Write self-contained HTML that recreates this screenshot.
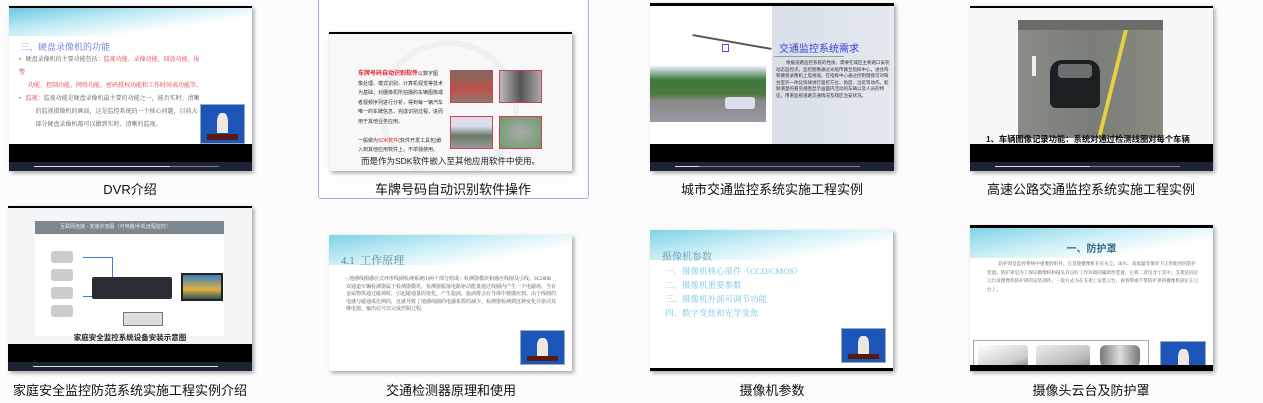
<!DOCTYPE html>
<html><head><meta charset="utf-8"><style>
*{margin:0;padding:0;box-sizing:border-box}
body{width:1263px;height:403px;background:#fcfcfc;position:relative;overflow:hidden;font-family:"Liberation Sans","Noto Sans CJK SC",sans-serif}
.a{position:absolute}
.card{position:absolute;background:#fff;box-shadow:2px 2px 4px rgba(0,0,0,.35);overflow:hidden}
.cap{position:absolute;font-size:13px;color:#111;text-align:center;width:270px}
.bar{position:absolute;left:0;right:0;bottom:0;height:9px;background:#1c2434}
.prog{position:absolute;top:4px;height:1px;background:#7a8090}
.blk{position:absolute;left:0;right:0;background:#000}
.wave{position:absolute;left:0;top:0;width:100%;height:32px;background:linear-gradient(170deg,#7fd3e6 0%,#c9eef6 40%,#fff 75%)}
.serif{font-family:"Liberation Serif","Noto Serif CJK SC",serif}
.anchor{position:absolute;background:#1b56b8;border:1px solid #9ab}
.anchor i{position:absolute;left:38%;top:20%;width:25%;height:55%;background:#f0e8e0;border-radius:40% 40% 0 0}
.anchor b{position:absolute;left:15%;bottom:8%;width:70%;height:16%;background:#5a1a10}
</style></head><body>

<div class="a" style="left:318px;top:-4px;width:271px;height:203px;border:1px solid #9db5dd;border-radius:3px;background:#fdfdfd"></div>

<!-- Card1 -->
<div class="card" style="left:9px;top:6px;width:243px;height:165px">
 <div class="blk" style="top:0;height:2px"></div>
 <div class="wave" style="top:2px;height:28px;background:linear-gradient(172deg,#6cc8e0 0%,#bfe9f4 35%,#fff 70%)"></div>
 <div class="a serif" style="left:11px;top:34px;font-size:9px;color:#5c6ee0">三、硬盘录像机的功能</div>
 <div class="a serif" style="left:10px;top:48px;width:225px;font-size:6px;line-height:13px;color:#555">•&nbsp;&nbsp; 硬盘录像机的主要功能包括：<span style="color:#e03040">监视功能、录像功能、回放功能、报</span><br><span style="color:#e03040">警<br>&nbsp;&nbsp;&nbsp;&nbsp;&nbsp;&nbsp;功能、控制功能、网络功能、密码授权功能和工作时间表功能等。</span><br>•&nbsp;&nbsp; <span style="color:#e03040">监视：</span>监视功能是硬盘录像机最主要的功能之一，能否实时、清晰<br>&nbsp;&nbsp;&nbsp;&nbsp;&nbsp;&nbsp;&nbsp;&nbsp;&nbsp;&nbsp;&nbsp;的监视摄像机的画面，这是监控系统的一个核心问题，目前大<br>&nbsp;&nbsp;&nbsp;&nbsp;&nbsp;&nbsp;&nbsp;&nbsp;&nbsp;&nbsp;&nbsp;部分硬盘录像机都可以做到实时、清晰的监视。</div>
 <div class="anchor" style="left:191px;top:98px;width:45px;height:40px"><i></i><b></b></div>
 <div class="blk" style="top:138px;height:27px"></div>
 <div class="bar"><div class="prog" style="left:25px;width:185px"></div><div class="prog" style="left:25px;width:136px;background:#ddd"></div></div>
</div>
<div class="cap" style="left:-5px;top:179px">DVR介绍</div>

<!-- Card2 -->
<div class="card" style="left:329px;top:32px;width:243px;height:139px;background:#f8f8f8">
 <div class="blk" style="top:0;height:2px"></div>
 <div class="a" style="left:50px;top:8px;width:140px;height:140px;border-radius:50%;border:6px solid #eef1f4"></div>
 <div class="a" style="left:29px;top:38px;width:85px;font-size:5px;line-height:9.5px;color:#333"><b style="color:#e02030;font-size:6px">车牌号码自动识别软件</b>以数字图像处理、模式识别、计算机视觉等技术为基础，对摄像机所拍摄的车辆图像或者视频序列进行分析，得到每一辆汽车唯一的车牌信息，完成识别过程，进而用于其他业务应用。<br><br>一般做为<span style="color:#e02030">SDK软件</span>(软件开发工具包)嵌入到其他应用软件上，不单独使用。</div>
 <div class="a" style="left:121px;top:38px;width:43px;height:33px;background:linear-gradient(#7a6a60,#c0504a 60%,#8a7a70);border:1px solid #d04050"></div>
 <div class="a" style="left:170px;top:38px;width:43px;height:33px;background:linear-gradient(90deg,#bbb,#555 50%,#aaa);border:1px solid #d04050"></div>
 <div class="a" style="left:121px;top:84px;width:43px;height:33px;background:linear-gradient(#dde 30%,#6a7a6a 60%,#999);border:1px solid #d04050"></div>
 <div class="a" style="left:170px;top:84px;width:43px;height:33px;background:radial-gradient(#aaa,#6c9c6c);border:1px solid #d04050"></div>
 <div class="a" style="left:0;width:243px;top:123px;text-align:center;font-size:8.5px;color:#222">而是作为SDK软件嵌入至其他应用软件中使用。</div>
</div>
<div class="cap" style="left:318px;top:179px">车牌号码自动识别软件操作</div>

<!-- Card3 -->
<div class="card" style="left:650px;top:3px;width:244px;height:168px">
 <div class="blk" style="top:0;height:3px"></div>
 <div class="a" style="left:0;top:3px;width:122px;height:138px;background:#fff"></div>
 <div class="a" style="left:0;top:63px;width:116px;height:56px;background:linear-gradient(#eef 0%,#3d7a38 25%,#4b7a40 50%,#888 62%,#9a9aa4 100%)"></div>
 <div class="a" style="left:42px;top:38px;width:80px;height:2px;background:#555;transform:rotate(10deg)"></div>
 <div class="a" style="left:72px;top:41px;width:7px;height:8px;border:1px solid #7040e0;background:#fff"></div>
 <div class="a" style="left:75px;top:94px;width:30px;height:12px;background:#dde;border-radius:3px"></div>
 <div class="a" style="left:122px;top:3px;width:122px;height:138px;background:linear-gradient(90deg,#d8dfe8,#e4e9f0)"></div>
 <div class="a" style="left:129px;top:37px;font-size:10px;color:#3b3bd8">交通监控系统需求</div>
 <div class="a" style="left:124px;top:53px;width:70px;height:1px;background:#999"></div>
 <div class="a" style="left:126px;top:57px;width:114px;font-size:4.5px;line-height:6.6px;color:#333">&nbsp;&nbsp;&nbsp;&nbsp;&nbsp;&nbsp;&nbsp;&nbsp;根据道路监控系统的性质，需要在城区主要路口安装动态监控点。监控图像通过光缆传输至指挥中心，进驻阵和硬盘录像机上电视墙。在指挥中心通过控制键盘可对每台室外一体化快球进行遥控方位、角度、远近等动作。能够清楚的看见视图显示画面内活动的车辆以及人员的特征，用来监视道路交通情况及辖区治安状况。</div>
 <div class="blk" style="top:141px;height:27px"></div>
 <div class="bar"><div class="prog" style="left:25px;width:185px"></div><div class="prog" style="left:25px;width:24px;background:#ddd"></div></div>
</div>
<div class="cap" style="left:637px;top:179px">城市交通监控系统实施工程实例</div>

<!-- Card4 -->
<div class="card" style="left:970px;top:6px;width:243px;height:165px;background:#f6f7f8">
 <div class="blk" style="top:0;height:2px"></div>
 <div class="a" style="left:48px;top:14px;width:145px;height:118px;background:linear-gradient(90deg,#8a8c88,#7a7c78 50%,#8a8a80);"></div>
 <div class="a" style="left:142px;top:14px;width:4px;height:116px;background:#e8d040;transform:skewX(-14deg)"></div>
 <div class="a" style="left:48px;top:14px;width:145px;height:10px;background:#6a6c68"></div>
 <div class="a" style="left:62px;top:50px;width:4px;height:20px;background:#eee"></div>
 <div class="a" style="left:80px;top:54px;width:50px;height:48px;background:#1a1f22;border-radius:12px 12px 6px 6px"></div>
 <div class="a" style="left:88px;top:58px;width:34px;height:14px;background:#6a7070;border-radius:4px"></div>
 <div class="a" style="left:16px;top:127px;font-size:8.3px;color:#111;font-weight:bold">1、车辆图像记录功能：系统对通过检测线圈对每个车辆</div>
 <div class="blk" style="top:138px;height:27px"></div>
 <div class="bar"><div class="prog" style="left:25px;width:185px"></div><div class="prog" style="left:25px;width:95px;background:#ddd"></div></div>
</div>
<div class="cap" style="left:956px;top:179px">高速公路交通监控系统实施工程实例</div>

<!-- Card5 -->
<div class="card" style="left:8px;top:206px;width:244px;height:165px;background:#f4f5f6">
 <div class="blk" style="top:0;height:2px"></div>
 <div class="a" style="left:27px;top:15px;width:189px;height:13px;background:#7c8790;color:#e6eaee;font-size:5px;line-height:13px;padding-left:25px">互联网连接 · 安装示意图（可电脑/手机远程监控）</div>
 <div class="a" style="left:27px;top:29px;width:189px;height:101px;background:#fff"></div>
 <div class="a" style="left:43px;top:45px;width:22px;height:12px;background:#ccc;border-radius:3px"></div>
 <div class="a" style="left:43px;top:63px;width:22px;height:12px;background:#ccc;border-radius:3px"></div>
 <div class="a" style="left:43px;top:81px;width:22px;height:12px;background:#ccc;border-radius:3px"></div>
 <div class="a" style="left:43px;top:99px;width:22px;height:12px;background:#ccc;border-radius:3px"></div>
 <div class="a" style="left:75px;top:51px;width:30px;height:40px;border:1px solid #3a7be0;border-left:none"></div>
 <div class="a" style="left:84px;top:71px;width:80px;height:22px;background:#2a2d33;border-radius:2px"></div>
 <div class="a" style="left:173px;top:67px;width:42px;height:28px;background:linear-gradient(#3a80c0,#e0b040 60%,#355);border:2px solid #222"></div>
 <div class="a" style="left:115px;top:106px;width:40px;height:14px;background:#ddd;border:1px solid #777"></div>
 <div class="a" style="left:0;width:244px;top:126px;text-align:center;font-size:7.5px;font-weight:bold;color:#222">家庭安全监控系统设备安装示意图</div>
 <div class="blk" style="top:138px;height:27px"></div>
 <div class="bar"><div class="prog" style="left:25px;width:185px;background:#ddd"></div></div>
</div>
<div class="cap" style="left:-5px;top:380px">家庭安全监控防范系统实施工程实例介绍</div>

<!-- Card6 -->
<div class="card" style="left:329px;top:235px;width:243px;height:136px">
 <div class="wave" style="height:30px"></div>
 <div class="a serif" style="left:12px;top:17px;font-size:11px;color:#5a8aa0">4.1&nbsp; 工作原理</div>
 <div class="a serif" style="left:17px;top:41px;width:210px;font-size:5px;line-height:7.5px;color:#555"><span style="color:#3bc0e0">▪</span>&nbsp;地感线圈感应式环形线圈检测系统由两个部分组成：检测器模块和感应线圈及引线。SC200B 双通道车辆检测器属于检测器模块。检测器振荡电路驱动能量通过线圈内产生一个电磁场。当有金属物体通过磁场时，引起磁通量的变化，产生旋涡。旋涡将会在导体中被感应到。由于线圈的电感与磁通成比例的，这就导致了地感线圈的电感系数的减少。检测器检测到这种变化并驱动其继电器，输出信号以完成控制过程。</div>
 <div class="anchor" style="left:191px;top:95px;width:45px;height:35px"><i></i><b></b></div>
</div>
<div class="cap" style="left:316px;top:380px">交通检测器原理和使用</div>

<!-- Card7 -->
<div class="card" style="left:650px;top:230px;width:243px;height:141px">
 <div class="wave" style="height:30px"></div>
 <div class="a serif" style="left:12px;top:18px;font-size:10px;color:#6a9ab0">摄像机参数</div>
 <div class="a serif" style="left:15px;top:34px;font-size:8.5px;line-height:14px;color:#7ac4e4">一、摄像机核心部件（CCD/CMOS）<br>二、摄像机重要参数<br>三、摄像机外部可调节功能<br>四、数字变焦和光学变焦</div>
 <div class="anchor" style="left:191px;top:98px;width:45px;height:35px"><i></i><b></b></div>
 <div class="blk" style="top:138px;height:3px"></div>
</div>
<div class="cap" style="left:637px;top:380px">摄像机参数</div>

<!-- Card8 -->
<div class="card" style="left:970px;top:225px;width:243px;height:146px">
 <div class="blk" style="top:0;height:3px"></div>
 <div class="wave" style="top:3px;height:30px"></div>
 <div class="a" style="left:0;width:243px;top:15px;text-align:center;font-size:10px;font-weight:bold;color:#3a6a8a">一、防护罩</div>
 <div class="a serif" style="left:17px;top:35px;width:212px;font-size:4.6px;line-height:8.5px;color:#555">&nbsp;&nbsp;&nbsp;&nbsp;&nbsp;&nbsp;&nbsp;&nbsp;&nbsp;&nbsp;防护罩是监控系统中重要的组件。它是使摄像机在有灰尘、雨水、高低温等情况下正常使用的防护装置。防护罩是为了保证摄像机和镜头有良好工作环境的辅助性装置，它将二者包含于其中。支架是固定云台及摄像机防护罩的安装部件。一般方式为在支架上安装云台，再将带或不带防护罩的摄像机固定在云台上。</div>
 <div class="a" style="left:3px;top:115px;width:176px;height:45px;border:1px solid #aaa;background:#fff"></div>
 <div class="a" style="left:8px;top:120px;width:50px;height:30px;background:linear-gradient(160deg,#fff,#ccc 60%,#555);border-radius:3px"></div>
 <div class="a" style="left:66px;top:120px;width:54px;height:30px;background:linear-gradient(160deg,#eee,#bbb 60%,#666);border-radius:3px"></div>
 <div class="a" style="left:130px;top:120px;width:40px;height:34px;background:linear-gradient(90deg,#777,#ddd 50%,#777);border-radius:6px 6px 20px 20px"></div>
 <div class="anchor" style="left:190px;top:116px;width:46px;height:37px"><i></i><b></b></div>
 <div class="blk" style="top:140px;height:6px"></div>
</div>
<div class="cap" style="left:956px;top:380px">摄像头云台及防护罩</div>

</body></html>
